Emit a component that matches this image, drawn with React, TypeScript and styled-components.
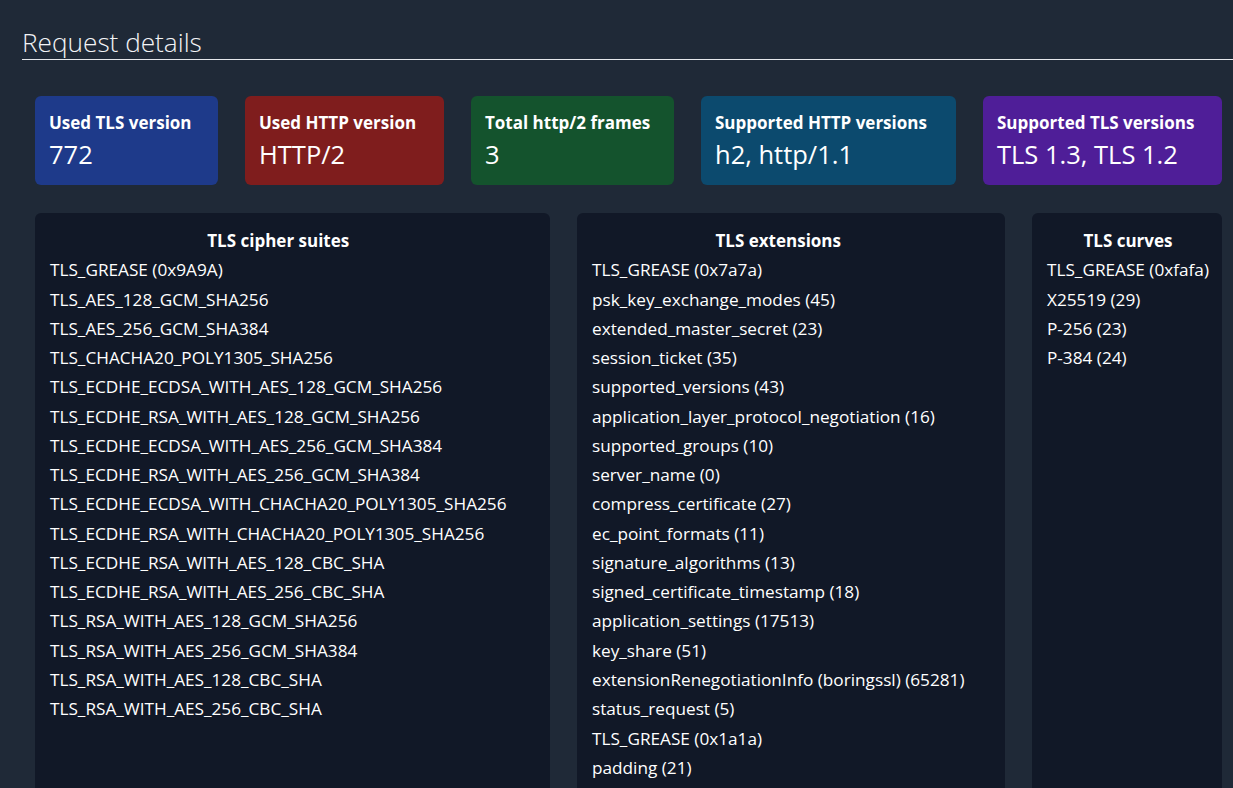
import React from "react";
import styled, { createGlobalStyle } from "styled-components";

const Global = createGlobalStyle`
  html, body { margin: 0; padding: 0; background: #1f2937; }
  body { font-family: "Open Sans", "Noto Sans", sans-serif; color: #ffffff; overflow: hidden; }
  * { box-sizing: border-box; }
`;

const Page = styled.div`
  width: 1233px;
  height: 788px;
  overflow: hidden;
  padding-top: 26px;
`;

const Header = styled.h1`
  margin: 0 0 0 22px;
  font-size: 26.2px;
  font-weight: 300;
  line-height: 32px;
  padding-bottom: 1px;
  border-bottom: 1px solid #e5e7eb;
  color: #f3f4f6;
`;

const Content = styled.div`
  margin-left: 35px;
  display: flex;
  flex-direction: column;
  gap: 28px;
  padding-top: 36px;
`;

const Cards = styled.div`
  display: flex;
  gap: 27px;
`;

const Card = styled.div<{ $bg: string; $w: number }>`
  width: ${(p) => p.$w}px;
  height: 89px;
  background: ${(p) => p.$bg};
  border-radius: 6px;
  padding: 15px 14px 0 14px;
  display: flex;
  flex-direction: column;
`;

const CardTitle = styled.div`
  font-size: 17px;
  font-weight: 700;
  line-height: 24px;
  white-space: nowrap;
`;

const CardValue = styled.div`
  font-size: 25.5px;
  line-height: 40px;
  margin-top: -1px;
  white-space: nowrap;
`;

const Panels = styled.div`
  display: flex;
  gap: 27px;
  align-items: flex-start;
`;

const Panel = styled.div<{ $w: number }>`
  width: ${(p) => p.$w}px;
  height: 620px;
  background: #111827;
  border-radius: 6px;
  padding: 13px 15px 0 15px;
  display: flex;
  align-items: flex-start;
`;

const Column = styled.div`
  width: fit-content;
  display: flex;
  flex-direction: column;
`;

const PanelTitle = styled.div`
  text-align: center;
  font-weight: 700;
  font-size: 17px;
  line-height: 29.3px;
`;

const List = styled.ul`
  list-style: none;
  margin: 0;
  padding: 0;
`;

const Item = styled.li`
  font-size: 17.2px;
  line-height: 29.27px;
  white-space: nowrap;
`;

const cards = [
  { t: "Used TLS version", v: "772", bg: "#1e3a8a", w: 183 },
  { t: "Used HTTP version", v: "HTTP/2", bg: "#7f1d1d", w: 199 },
  { t: "Total http/2 frames", v: "3", bg: "#14532d", w: 203 },
  { t: "Supported HTTP versions", v: "h2, http/1.1", bg: "#0c4a6e", w: 255 },
  { t: "Supported TLS versions", v: "TLS 1.3, TLS 1.2", bg: "#4f1e98", w: 239 },
];

const ciphers = [
  "TLS_GREASE (0x9A9A)",
  "TLS_AES_128_GCM_SHA256",
  "TLS_AES_256_GCM_SHA384",
  "TLS_CHACHA20_POLY1305_SHA256",
  "TLS_ECDHE_ECDSA_WITH_AES_128_GCM_SHA256",
  "TLS_ECDHE_RSA_WITH_AES_128_GCM_SHA256",
  "TLS_ECDHE_ECDSA_WITH_AES_256_GCM_SHA384",
  "TLS_ECDHE_RSA_WITH_AES_256_GCM_SHA384",
  "TLS_ECDHE_ECDSA_WITH_CHACHA20_POLY1305_SHA256",
  "TLS_ECDHE_RSA_WITH_CHACHA20_POLY1305_SHA256",
  "TLS_ECDHE_RSA_WITH_AES_128_CBC_SHA",
  "TLS_ECDHE_RSA_WITH_AES_256_CBC_SHA",
  "TLS_RSA_WITH_AES_128_GCM_SHA256",
  "TLS_RSA_WITH_AES_256_GCM_SHA384",
  "TLS_RSA_WITH_AES_128_CBC_SHA",
  "TLS_RSA_WITH_AES_256_CBC_SHA",
];

const extensions = [
  "TLS_GREASE (0x7a7a)",
  "psk_key_exchange_modes (45)",
  "extended_master_secret (23)",
  "session_ticket (35)",
  "supported_versions (43)",
  "application_layer_protocol_negotiation (16)",
  "supported_groups (10)",
  "server_name (0)",
  "compress_certificate (27)",
  "ec_point_formats (11)",
  "signature_algorithms (13)",
  "signed_certificate_timestamp (18)",
  "application_settings (17513)",
  "key_share (51)",
  "extensionRenegotiationInfo (boringssl) (65281)",
  "status_request (5)",
  "TLS_GREASE (0x1a1a)",
  "padding (21)",
];

const curves = ["TLS_GREASE (0xfafa)", "X25519 (29)", "P-256 (23)", "P-384 (24)"];

const panels = [
  { t: "TLS cipher suites", items: ciphers, w: 515 },
  { t: "TLS extensions", items: extensions, w: 428 },
  { t: "TLS curves", items: curves, w: 190 },
];

export default function App() {
  return (
    <Page>
      <Global />
      <Header>Request details</Header>
      <Content>
        <Cards>
          {cards.map((c) => (
            <Card key={c.t} $bg={c.bg} $w={c.w}>
              <CardTitle>{c.t}</CardTitle>
              <CardValue>{c.v}</CardValue>
            </Card>
          ))}
        </Cards>
        <Panels>
          {panels.map((p) => (
            <Panel key={p.t} $w={p.w}>
              <Column>
                <PanelTitle>{p.t}</PanelTitle>
                <List>
                  {p.items.map((i) => (
                    <Item key={i}>{i}</Item>
                  ))}
                </List>
              </Column>
            </Panel>
          ))}
        </Panels>
      </Content>
    </Page>
  );
}
